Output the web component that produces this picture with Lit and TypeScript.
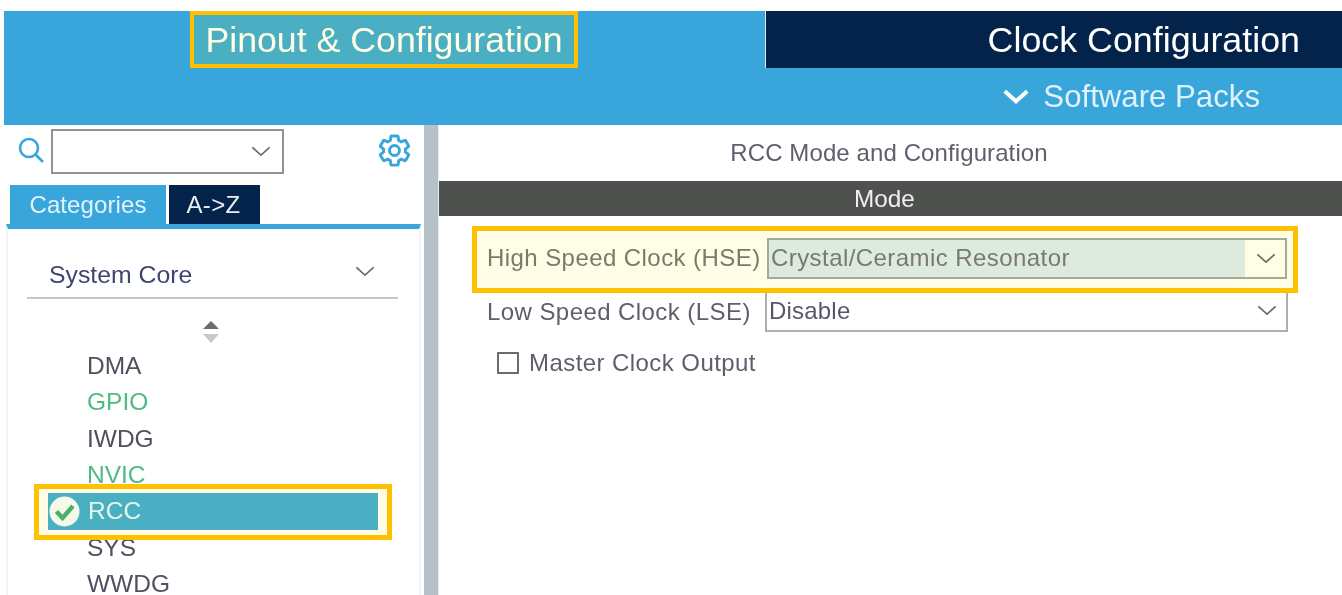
import { LitElement, html, css, svg } from "lit";
import { customElement } from "lit/decorators.js";

const chevron = (cls: string) => html`<svg class=${cls} viewBox="0 0 22 12"><polyline points="1.5,1.5 11,10 20.5,1.5" fill="none" stroke="currentColor" stroke-width="2"/></svg>`;
const gear = svg`<path fill="none" stroke="#38a6db" stroke-width="2" d="M19.43 12.98c.04-.32.07-.64.07-.98 0-.34-.03-.66-.07-.98l2.11-1.65c.19-.15.24-.42.12-.64l-2-3.46c-.09-.16-.26-.25-.44-.25-.06 0-.12.01-.17.03l-2.49 1c-.52-.4-1.08-.73-1.69-.98l-.38-2.65C14.46 2.18 14.25 2 14 2h-4c-.25 0-.46.18-.49.42l-.38 2.65c-.61.25-1.17.59-1.69.98l-2.49-1c-.06-.02-.12-.03-.18-.03-.17 0-.34.09-.43.25l-2 3.46c-.13.22-.07.49.12.64l2.11 1.65c-.04.32-.07.65-.07.98 0 .33.03.66.07.98l-2.11 1.65c-.19.15-.24.42-.12.64l2 3.46c.09.16.26.25.44.25.06 0 .12-.01.17-.03l2.49-1c.52.4 1.08.73 1.69.98l.38 2.65c.03.24.24.42.49.42h4c.25 0 .46-.18.49-.42l.38-2.65c.61-.25 1.17-.59 1.69-.98l2.49 1c.06.02.12.03.18.03.17 0 .34-.09.43-.25l2-3.46c.12-.22.07-.49-.12-.64l-2.11-1.65z"/><circle cx="12" cy="12" r="3.4" fill="none" stroke="#38a6db" stroke-width="2"/>`;

@customElement("app-root")
export class AppRoot extends LitElement {
  static styles = css`
    :host {
      display: block;
      width: 1342px;
      height: 595px;
      overflow: hidden;
      background: #fff;
      font-family: "Liberation Sans", Arial, sans-serif;
      filter: blur(0.4px);
    }
    .page { padding: 11px 0 0 4px; height: 584px; display: flex; flex-direction: column; }
    .header { background: #38a6db; height: 114px; flex: none; display: flex; flex-direction: column; }
    .tabs { display: flex; height: 57px; }
    .tab-main { width: 761px; padding-right: 1px; box-sizing: border-box; display: flex; justify-content: center; }
    .tab-hl {
      box-sizing: border-box; width: 388px; height: 57px;
      border: 4px solid #ffc000; background: #4bafc4;
      color: #fffde3; font-size: 35.7px; line-height: 50px; text-align: center; white-space: nowrap;
    }
    .tab-clock {
      flex: 1; background: #03234b; color: #fff; font-size: 35.8px; line-height: 58px;
      text-align: right; padding-right: 42px; border-left: 1px solid #dfeaf2;
    }
    .packs { display: flex; align-items: center; justify-content: flex-end; height: 57px; padding-right: 82px; color: #dff1fa; font-size: 31.2px; gap: 14px; }
    .packs-chev { width: 26px; height: 15px; color: #fff; }
    .packs-chev polyline { stroke-width: 3.4; }

    .body { flex: 1; display: flex; min-height: 0; }
    .side { width: 420px; flex: none; display: flex; flex-direction: column; }
    .split { width: 14px; flex: none; background: #b5c1c9; border-right: 1px solid #e8edf0; }
    .main { flex: 1; min-width: 0; display: flex; flex-direction: column; }

    .search { display: flex; align-items: flex-start; height: 60px; padding: 4px 0 0 14px; box-sizing: border-box; }
    .search-ico { width: 27px; height: 27px; flex: none; margin-top: 8px; }
    .combo {
      box-sizing: border-box; margin-left: 6px; width: 233px; height: 45px; border: 2px solid #8f9498; background: #fff;
      display: flex; align-items: center; justify-content: flex-end; padding-right: 11px; color: #757575;
    }
    .chev { width: 20px; height: 11px; color: #6e6e6e; flex: none; }
    .gear { width: 35px; height: 35px; margin: 4px 0 0 93px; }
    .cat-tabs { display: flex; padding-left: 6px; gap: 3px; height: 39px; }
    .cat { background: #38a6db; color: #e3f3fb; width: 156px; font-size: 24px; line-height: 39px; text-align: center; letter-spacing: 0.1px; }
    .az { background: #03234b; color: #e8edf2; width: 91px; font-size: 24px; line-height: 39px; text-align: center; letter-spacing: 0.3px; padding-right: 2px; box-sizing: border-box; }
    .panel {
      flex: 1; margin-left: 2px; margin-right: 3px; border-top: 5px solid #38a6db;
      border-left: 2px solid #f3f5f5; border-right: 2px solid #f3f5f5; min-height: 0; overflow: hidden;
    }
    .group {
      margin: 27px 21px 0 19px; height: 41px; border-bottom: 2px solid #c0c8d0;
      display: flex; justify-content: space-between; padding: 0 23px 0 22px; color: #3f4570; font-size: 24.8px; line-height: 38px;
    }
    .group .chev { margin-top: 10px; }
    .sort { width: 16px; height: 23px; display: block; margin: 22px 0 0 195px; }
    .list { margin: 4px 0 0 0; }
    .item { height: 36.4px; line-height: 36px; padding-left: 79px; font-size: 24.5px; color: #50505f; }
    .item.ok { color: #4fbb82; }
    .rcc-box {
      box-sizing: border-box; position: relative; z-index: 1; margin: -10px 27px -10px 26px; height: 56px;
      border: 5px solid #ffc000; background: #fffde6; padding: 4px 9px;
    }
    .rcc {
      height: 37px; background: #4bafc4; display: flex; align-items: center; padding-left: 1px; gap: 8px;
      color: #e6f6e8; font-size: 24.5px;
    }
    .check { width: 31px; height: 31px; flex: none; }

    .title { height: 56px; line-height: 56px; text-align: center; color: #5d5f6e; font-size: 24px; letter-spacing: 0.1px; padding-right: 3px; }
    .mode { height: 35px; line-height: 35px; background: #4f514f; color: #eef0ee; text-align: center; font-size: 24.3px; padding-right: 12px; }
    .form { padding: 10px 55px 0 33px; display: flex; flex-direction: column; }
    .row-hl {
      box-sizing: border-box; position: relative; z-index: 1; height: 67px; display: flex; align-items: center;
      border: 5px solid #ffc000; background: #fffde6; padding: 0 6px 0 10px; margin-right: -11px; width: 826px;
    }
    .lbl { font-size: 24px; letter-spacing: 0.43px; white-space: nowrap; color: #5d5f6e; }
    .row-hl .lbl { color: #7a7a6c; width: 280px; flex: none; margin-bottom: 4px; }
    .sel-hl {
      box-sizing: border-box; flex: 1; height: 41px; display: flex; border: 2px solid #a3aa9b; margin-top: -2px;
      font-size: 24px; letter-spacing: 0.43px; color: #7a7a6c;
    }
    .sel-text { flex: 1; background: #dcebdd; line-height: 35px; padding-left: 2px; }
    .sel-btn { width: 40px; display: flex; align-items: center; justify-content: center; color: #777; padding-left: 1px; box-sizing: border-box; }
    .row { display: flex; align-items: center; height: 39px; padding-left: 15px; }
    .row .lbl { width: 278px; flex: none; margin-bottom: 2px; }
    .sel {
      box-sizing: border-box; flex: 1; height: 39px; display: flex; align-items: center; justify-content: space-between;
      border: 2px solid #a9b0b7; border-top: none; padding: 0 9px 2px 2px; font-size: 24px; letter-spacing: 0.2px; color: #55576a; margin-right: -1px;
    }
    .chk-row { display: flex; align-items: center; padding: 17px 0 0 25px; gap: 10px; }
    .box { box-sizing: border-box; width: 22px; height: 22px; border: 2px solid #6b6b6b; border-radius: 1px; }
  `;

  render() {
    const plain = ["DMA", "GPIO", "IWDG", "NVIC"];
    return html`<div class="page">
      <div class="header">
        <div class="tabs">
          <div class="tab-main"><div class="tab-hl">Pinout &amp; Configuration</div></div>
          <div class="tab-clock">Clock Configuration</div>
        </div>
        <div class="packs">${chevron("packs-chev")}<span>Software Packs</span></div>
      </div>
      <div class="body">
        <div class="side">
          <div class="search">
            <svg class="search-ico" viewBox="0 0 27 27"><circle cx="11" cy="11" r="9" fill="none" stroke="#38a6db" stroke-width="2.6"/><line x1="17.5" y1="17.5" x2="25" y2="25" stroke="#38a6db" stroke-width="2.6"/></svg>
            <div class="combo">${chevron("chev")}</div>
            <svg class="gear" viewBox="0 0 24 24">${gear}</svg>
          </div>
          <div class="cat-tabs"><div class="cat">Categories</div><div class="az">A-&gt;Z</div></div>
          <div class="panel">
            <div class="group"><span>System Core</span>${chevron("chev")}</div>
            <svg class="sort" viewBox="0 0 16 23"><polygon points="8,0 16,8 0,8" fill="#6d6d6d"/><polygon points="0,13 16,13 8,22" fill="#c6c9cc"/></svg>
            <div class="list">
              ${plain.map((n) => html`<div class="item ${n === "GPIO" || n === "NVIC" ? "ok" : ""}">${n}</div>`)}
              <div class="rcc-box"><div class="rcc">
                <svg class="check" viewBox="0 0 31 31"><circle cx="15.5" cy="15.5" r="15" fill="#f4f9e8"/><polyline points="7.5,15.5 13.5,22 24,10" fill="none" stroke="#4cb06a" stroke-width="4.4"/></svg>
                <span>RCC</span>
              </div></div>
              <div class="item">SYS</div>
              <div class="item">WWDG</div>
            </div>
          </div>
        </div>
        <div class="split"></div>
        <div class="main">
          <div class="title">RCC Mode and Configuration</div>
          <div class="mode">Mode</div>
          <div class="form">
            <div class="row-hl">
              <span class="lbl">High Speed Clock (HSE)</span>
              <div class="sel-hl"><div class="sel-text">Crystal/Ceramic Resonator</div><div class="sel-btn">${chevron("chev")}</div></div>
            </div>
            <div class="row"><span class="lbl">Low Speed Clock (LSE)</span><div class="sel"><span>Disable</span>${chevron("chev")}</div></div>
            <div class="chk-row"><div class="box"></div><span class="lbl">Master Clock Output</span></div>
          </div>
        </div>
      </div>
    </div>`;
  }
}
